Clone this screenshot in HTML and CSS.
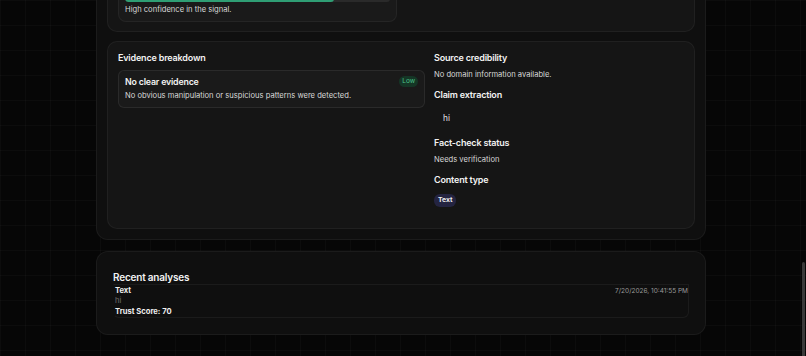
FILE: index.html
```html
<!DOCTYPE html>
<html lang="en">
<head>
<meta charset="utf-8">
<title>Analysis</title>
<link rel="stylesheet" href="styles.css">
</head>
<body>
<div class="wrap">
  <section class="panel result">
    <div class="card card-top">
      <div class="sub">
        <div class="track"><div class="fill" style="width:79%"></div></div>
        <p class="body">High confidence in the signal.</p>
      </div>
      <div></div>
    </div>
    <div class="card card-evidence">
      <div class="col-left">
        <h3 class="h">Evidence breakdown</h3>
        <div class="ev">
          <div class="ev-head">
            <span class="ev-title">No clear evidence</span>
            <span class="badge low">Low</span>
          </div>
          <p class="body">No obvious manipulation or suspicious patterns were detected.</p>
        </div>
      </div>
      <div class="col-right">
        <h3 class="h">Source credibility</h3>
        <p class="body">No domain information available.</p>
        <h3 class="h gap">Claim extraction</h3>
        <ul class="claims"><li>hi</li></ul>
        <h3 class="h gap2">Fact-check status</h3>
        <p class="body">Needs verification</p>
        <h3 class="h gap">Content type</h3>
        <span class="badge type">Text</span>
      </div>
    </div>
  </section>

  <section class="panel recent">
    <h2 class="recent-title">Recent analyses</h2>
    <div class="item">
      <div class="item-main">
        <div class="item-type">Text</div>
        <div class="item-text">hi</div>
        <div class="item-score">Trust Score: 70</div>
      </div>
      <div class="item-date">7/20/2026, 10:41:55 PM</div>
    </div>
  </section>
</div>
<div class="scrollbar"></div>
</body>
</html>
```

FILE: styles.css
```css
* { box-sizing: border-box; }
html, body { margin: 0; padding: 0; }
body {
  width: 806px;
  height: 356px;
  overflow: hidden;
  background-color: #060606;
  background-image:
    linear-gradient(to right, rgba(255,255,255,0.022) 1px, transparent 1px),
    linear-gradient(to bottom, rgba(255,255,255,0.022) 1px, transparent 1px);
  background-size: 25px 25px;
  font-family: Inter, "Noto Sans", "Liberation Sans", sans-serif;
  color: #e8e8e8;
}
p, h2, h3, ul { margin: 0; }

.wrap {
  width: 610px;
  margin: -35px 0 0 96px;
}

.panel {
  background: #0f0f0f;
  border: 1px solid rgba(255,255,255,0.05);
  border-radius: 12px;
}

.result {
  padding: 10px;
  display: flex;
  flex-direction: column;
  gap: 9px;
}

.card {
  background: #151515;
  border: 1px solid rgba(255,255,255,0.05);
  border-radius: 10px;
}

.card-top {
  padding: 10px 10px 9px;
  display: grid;
  grid-template-columns: 1fr 1fr;
  gap: 8px;
}
.sub {
  background: #1a1a1a;
  border: 1px solid rgba(255,255,255,0.05);
  border-radius: 8px;
  padding: 8px 6px 5px;
}
.track {
  height: 6px;
  border-radius: 3px;
  background: #2a2a2a;
  margin-bottom: 2px;
  overflow: hidden;
}
.fill {
  height: 100%;
  background: #2f9e74;
  border-radius: 3px;
}

.body {
  font-size: 7.6px;
  line-height: 12px;
  color: #d8d8d8;
}

.card-evidence {
  padding: 10px 10px 21px;
  display: grid;
  grid-template-columns: 307px 1fr;
  gap: 9px;
}

.h {
  font-size: 9px;
  line-height: 12px;
  font-weight: 600;
  letter-spacing: -0.02em;
  color: #f2f2f2;
}
.col-left .h { margin-bottom: 6px; }
.col-right .body { margin-top: 5px; }
.h.gap { margin-top: 8px; }
.h.gap2 { margin-top: 13px; }

.ev {
  background: #1a1a1a;
  border: 1px solid rgba(255,255,255,0.07);
  border-radius: 6px;
  padding: 4px 6px 5px;
}
.ev-head {
  display: flex;
  justify-content: space-between;
  align-items: center;
  height: 12px;
  margin-bottom: 3px;
}
.ev-title {
  font-size: 8.8px;
  font-weight: 600;
  letter-spacing: -0.02em;
  color: #f2f2f2;
}

.badge {
  display: inline-flex;
  align-items: center;
  justify-content: center;
  border-radius: 6px;
  font-size: 6.5px;
  line-height: 1;
}
.badge.low {
  height: 11px;
  padding: 0 3px;
  background: #153626;
  color: #4cc38a;
}
.badge.type {
  margin-top: 7px;
  height: 13px;
  padding: 0 4px;
  background: #242441;
  color: #f0f0f0;
  font-weight: 700;
  font-size: 6.8px;
}

.claims {
  list-style: none;
  padding: 0 0 0 9px;
  margin-top: 11px;
  font-size: 8.3px;
  line-height: 12px;
  color: #e6e6e6;
}

.recent {
  margin-top: 11px;
  padding: 18px 16px 16px;
}
.recent-title {
  font-size: 10px;
  font-weight: 600;
  letter-spacing: -0.02em;
  line-height: 14px;
  color: #f2f2f2;
}
.item {
  display: flex;
  justify-content: space-between;
  align-items: flex-start;
  border: 1px solid rgba(255,255,255,0.05);
  border-radius: 0 0 6px 6px;
  border-left-color: transparent;
  padding: 1px 0 0 1px;
  height: 34px;
}
.item-type, .item-score {
  font-size: 7.6px;
  font-weight: 700;
  line-height: 10.5px;
  color: #f0f0f0;
}
.item-text {
  font-size: 7.6px;
  line-height: 10.5px;
  color: #6f6f6f;
}
.item-date {
  font-size: 6.5px;
  line-height: 10.5px;
  color: #9a9a9a;
}

.scrollbar {
  position: fixed;
  right: 1px;
  top: 262px;
  bottom: 0;
  width: 3px;
  background: #3a3a3a;
  border-radius: 2px 2px 0 0;
}
```
